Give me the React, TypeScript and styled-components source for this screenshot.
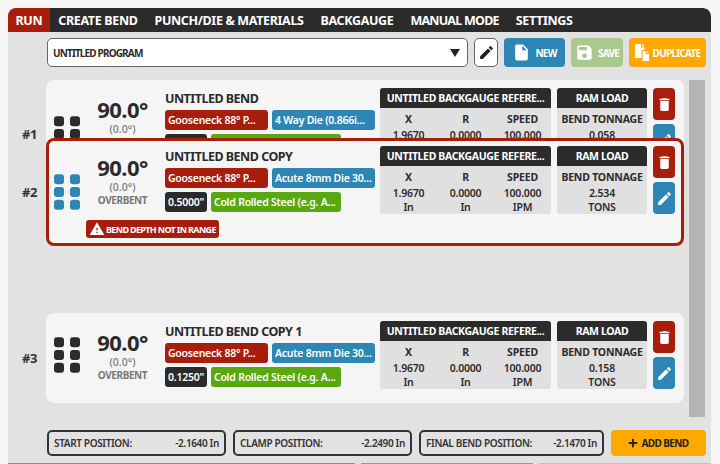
import React from "react";
import styled, { createGlobalStyle } from "styled-components";
import { FaPlus } from "react-icons/fa";
import { MdDelete, MdEdit, MdInsertDriveFile, MdSave, MdWarning } from "react-icons/md";

const RED = "#a81e0d";
const BLUE = "#2e86b5";
const GREEN = "#5aa80f";
const DARK = "#2b2b2b";
const ORANGE = "#ffa800";

const GlobalStyle = createGlobalStyle`
  html, body {
    margin: 0;
    height: 464px;
    overflow: hidden;
    background: #f5f5f5;
    font-family: "Noto Sans", "Liberation Sans", sans-serif;
    color: ${DARK};
  }
`;

const Page = styled.div`
  padding: 8px 9px 0 8px;
`;

const Panel = styled.main`
  background: #e2e2e2;
  border-radius: 8px 8px 0 0;
  height: 456px;
  overflow: hidden;
`;

const Nav = styled.nav`
  display: flex;
  height: 24px;
  background: ${DARK};
  border-radius: 8px 8px 0 0;
  overflow: hidden;
`;

const Tab = styled.div<{ active?: boolean; tight?: boolean }>`
  display: flex;
  align-items: center;
  padding: 0 ${p => (p.active ? "7.5px" : "8.5px")};
  background: ${p => (p.active ? RED : "transparent")};
  color: #fff;
  font-size: 12.5px;
  font-weight: 700;
  letter-spacing: ${p => (p.tight ? "-0.75px" : "-0.35px")};
  white-space: nowrap;
`;

const Toolbar = styled.div`
  display: flex;
  gap: 6px;
  margin: 6px 5px 0 39px;
  height: 29px;
`;

const Select = styled.div`
  flex: 1;
  display: flex;
  align-items: center;
  justify-content: space-between;
  padding: 0 5px;
  background: #fff;
  border: 1.5px solid #666;
  border-radius: 5px;
  font-size: 10px;
  font-weight: 700;
  letter-spacing: -0.85px;
`;

const Caret = styled.span`
  width: 0;
  height: 0;
  border-left: 5.5px solid transparent;
  border-right: 5.5px solid transparent;
  border-top: 8px solid #222;
  margin-right: 2px;
`;

const IconButton = styled.div`
  width: 24px;
  display: flex;
  align-items: center;
  justify-content: center;
  background: #fff;
  border: 1.5px solid #666;
  border-radius: 5px;
  box-sizing: border-box;
  font-size: 17px;
  color: #222;
`;

const ActionButton = styled.div<{ bg: string; width: number }>`
  width: ${p => p.width}px;
  display: flex;
  align-items: center;
  justify-content: center;
  gap: 4px;
  background: ${p => p.bg};
  border-radius: 4px;
  color: #fff;
  font-size: 10px;
  font-weight: 700;
  letter-spacing: -0.75px;
  svg {
    flex: none;
  }
`;

const Middle = styled.div`
  display: flex;
  gap: 5px;
  margin: 13px 6px 0 0;
  height: 337px;
`;

const List = styled.div`
  position: relative;
  width: 676px;
`;

const Scrollbar = styled.div`
  width: 16px;
  background: #b5b5b5;
`;

const Row = styled.div<{ dragged?: boolean; offset?: number }>`
  display: flex;
  align-items: center;
  ${p => (p.dragged ? "position: absolute; left: 0; top: 58px; z-index: 2;" : "")}
  margin-bottom: ${p => p.offset ?? 0}px;
`;

const RowNumber = styled.div`
  width: 38px;
  padding-left: 14px;
  box-sizing: border-box;
  font-size: 13px;
  font-weight: 700;
  letter-spacing: -0.3px;
  color: #333;
`;

const Card = styled.article<{ dragged?: boolean; hasAlert?: boolean }>`
  width: 638px;
  box-sizing: border-box;
  display: flex;
  align-items: center;
  gap: 7px;
  padding: 5px 6px ${p => (p.hasAlert ? "5px" : "11px")} 5px;
  background: #f5f5f5;
  border: 3px solid ${p => (p.dragged ? RED : "#f5f5f5")};
  border-radius: 8px;
`;

const Handle = styled.svg`
  flex: none;
  width: 26px;
  height: 36px;
`;

const CardBody = styled.div`
  flex: 1;
  display: flex;
  flex-direction: column;
  gap: 6px;
`;

const MainRow = styled.div`
  display: flex;
  align-items: flex-start;
`;

const Angle = styled.div`
  width: 71px;
  margin: 8px 7px 0 0;
  flex: none;
  display: flex;
  flex-direction: column;
  align-items: center;
  color: #777;
`;

const AngleValue = styled.div`
  font-size: 22px;
  line-height: 26px;
  font-weight: 700;
  letter-spacing: -0.6px;
  color: ${DARK};
`;

const AngleSub = styled.div`
  font-size: 10.5px;
  line-height: 14px;
  font-weight: 500;
`;

const AngleNote = styled.div`
  font-size: 10px;
  line-height: 13px;
  font-weight: 700;
  letter-spacing: -0.4px;
`;

const Info = styled.div`
  width: 215px;
  flex: none;
  display: flex;
  flex-direction: column;
  gap: 4px;
`;

const Title = styled.h2`
  margin: 0 0 -4px;
  font-size: 12.5px;
  line-height: 22px;
  font-weight: 700;
  letter-spacing: -0.5px;
`;

const PillRow = styled.div`
  display: flex;
  gap: 4px;
`;

const Pill = styled.div<{ bg: string; width?: number }>`
  height: 20px;
  width: ${p => (p.width ? `${p.width}px` : "auto")};
  box-sizing: border-box;
  padding: 0 3px;
  background: ${p => p.bg};
  border-radius: 3px;
  color: #fff;
  font-size: 10.5px;
  line-height: 20px;
  font-weight: 600;
  letter-spacing: -0.25px;
  white-space: nowrap;
`;

const Tables = styled.div`
  display: flex;
  gap: 6px;
`;

const DataTable = styled.section<{ width: number }>`
  width: ${p => p.width}px;
  background: #e0e0e0;
  border-radius: 3px;
  overflow: hidden;
`;

const TableHead = styled.div`
  height: 20px;
  background: ${DARK};
  color: #fff;
  font-size: 10.5px;
  line-height: 20px;
  font-weight: 700;
  letter-spacing: -0.35px;
  text-align: center;
  white-space: nowrap;
`;

const Columns = styled.div`
  display: flex;
  padding: 4px 0 0;
`;

const Column = styled.div`
  flex: 1;
  text-align: center;
  font-size: 10.5px;
  font-weight: 600;
  line-height: 14px;
  letter-spacing: -0.2px;
  white-space: nowrap;
`;

const ColumnLabel = styled.div`
  font-weight: 700;
  margin-bottom: 2px;
`;

const Buttons = styled.div`
  display: flex;
  flex-direction: column;
  gap: 4px;
  margin-left: 6px;
`;

const SquareButton = styled.div<{ bg: string }>`
  width: 22px;
  height: 32px;
  display: flex;
  align-items: center;
  justify-content: center;
  background: ${p => p.bg};
  border-radius: 4px;
  color: #fff;
  font-size: 17px;
`;

const Alert = styled.div`
  align-self: flex-start;
  margin-left: -1px;
  display: flex;
  align-items: center;
  gap: 1px;
  height: 18px;
  padding: 0 3px;
  background: ${RED};
  border-radius: 3px;
  color: #fff;
  font-size: 9px;
  font-weight: 700;
  letter-spacing: -0.65px;
  white-space: nowrap;
`;

const Footer = styled.div`
  display: flex;
  gap: 7px;
  margin: 13px 5px 0 39px;
  height: 26px;
`;

const Position = styled.div<{ width: number }>`
  width: ${p => p.width}px;
  box-sizing: border-box;
  display: flex;
  align-items: center;
  justify-content: space-between;
  padding: 0 5px;
  border: 2px solid #333;
  border-radius: 5px;
  font-size: 10px;
  font-weight: 600;
  letter-spacing: -0.35px;
  color: #333;
`;

const AddButton = styled.div`
  flex: 1;
  display: flex;
  align-items: center;
  justify-content: center;
  gap: 3px;
  background: ${ORANGE};
  border-radius: 4px;
  font-size: 10px;
  font-weight: 700;
  letter-spacing: -0.6px;
  color: #222;
`;

const BottomStrip = styled.div`
  display: flex;
  gap: 6px;
  margin-top: 7px;
  height: 10px;
`;

const StripPart = styled.div<{ bg: string; grow: number }>`
  flex: ${p => p.grow};
  background: ${p => p.bg};
`;

type Bend = {
  id: number;
  title: string;
  die: string;
  thickness: string;
  tonnage: string;
  alert: boolean;
};

const bends: Bend[] = [
  { id: 1, title: "UNTITLED BEND", die: "4 Way Die (0.866i...", thickness: '0.1250"', tonnage: "0.058", alert: true },
  { id: 2, title: "UNTITLED BEND COPY", die: "Acute 8mm Die 30...", thickness: '0.5000"', tonnage: "2.534", alert: true },
  { id: 3, title: "UNTITLED BEND COPY 1", die: "Acute 8mm Die 30...", thickness: '0.1250"', tonnage: "0.158", alert: false },
];

const GripIcon = ({ color }: { color: string }) => (
  <Handle viewBox="0 0 26 36">
    {[0.3, 13, 25.7].map(y =>
      [0, 16].map(x => <rect key={`${x}-${y}`} x={x} y={y} width="10" height="10" rx="3" fill={color} />)
    )}
  </Handle>
);

const DuplicateIcon = () => (
  <svg width="14" height="17" viewBox="0 0 14 17" fill="#fff">
    <path d="M0 0h6v3.500h3.500V6H6.500v8H0z" />
    <path d="M7 0l2.500 2.500H7z" />
    <path d="M7.500 7h3v3H14v7H7.500z" />
    <path d="M11.500 7L14 9h-2.500z" />
  </svg>
);

const BendCard = ({ bend, dragged }: { bend: Bend; dragged?: boolean }) => (
  <Card dragged={dragged} hasAlert={bend.alert}>
    <GripIcon color={dragged ? BLUE : DARK} />
    <CardBody>
      <MainRow>
        <Angle>
          <AngleValue>90.0°</AngleValue>
          <AngleSub>(0.0°)</AngleSub>
          <AngleNote>OVERBENT</AngleNote>
        </Angle>
        <Info>
          <Title>{bend.title}</Title>
          <PillRow>
            <Pill bg={RED} width={103}>Gooseneck 88° P...</Pill>
            <Pill bg={BLUE} width={103}>{bend.die}</Pill>
          </PillRow>
          <PillRow>
            <Pill bg={DARK}>{bend.thickness}</Pill>
            <Pill bg={GREEN} width={130}>Cold Rolled Steel (e.g. A...</Pill>
          </PillRow>
        </Info>
        <Tables>
          <DataTable width={171}>
            <TableHead>UNTITLED BACKGAUGE REFERE...</TableHead>
            <Columns>
              <Column><ColumnLabel>X</ColumnLabel>1.9670<br />In</Column>
              <Column><ColumnLabel>R</ColumnLabel>0.0000<br />In</Column>
              <Column><ColumnLabel>SPEED</ColumnLabel>100.000<br />IPM</Column>
            </Columns>
          </DataTable>
          <DataTable width={90}>
            <TableHead>RAM LOAD</TableHead>
            <Columns>
              <Column><ColumnLabel>BEND TONNAGE</ColumnLabel>{bend.tonnage}<br />TONS</Column>
            </Columns>
          </DataTable>
        </Tables>
        <Buttons>
          <SquareButton bg={RED}><MdDelete /></SquareButton>
          <SquareButton bg={BLUE}><MdEdit /></SquareButton>
        </Buttons>
      </MainRow>
      {bend.alert && (
        <Alert><MdWarning size={16} /> BEND DEPTH NOT IN RANGE</Alert>
      )}
    </CardBody>
  </Card>
);

const App: React.FC = () => (
  <Page>
    <GlobalStyle />
    <Panel>
      <Nav>
        <Tab active>RUN</Tab>
        <Tab>CREATE BEND</Tab>
        <Tab>PUNCH/DIE &amp; MATERIALS</Tab>
        <Tab>BACKGAUGE</Tab>
        <Tab tight>MANUAL MODE</Tab>
        <Tab>SETTINGS</Tab>
      </Nav>
      <Toolbar>
        <Select>UNTITLED PROGRAM<Caret /></Select>
        <IconButton><MdEdit /></IconButton>
        <ActionButton bg={BLUE} width={61}><MdInsertDriveFile size={19} /> NEW</ActionButton>
        <ActionButton bg="#a9c98f" width={52}><MdSave size={19} /> SAVE</ActionButton>
        <ActionButton bg={ORANGE} width={77}><DuplicateIcon /> DUPLICATE</ActionButton>
      </Toolbar>
      <Middle>
        <List>
          <Row offset={125}>
            <RowNumber>#1</RowNumber>
            <BendCard bend={bends[0]} />
          </Row>
          <Row dragged>
            <RowNumber>#2</RowNumber>
            <BendCard bend={bends[1]} dragged />
          </Row>
          <Row>
            <RowNumber>#3</RowNumber>
            <BendCard bend={bends[2]} />
          </Row>
        </List>
        <Scrollbar />
      </Middle>
      <Footer>
        <Position width={179}><span>START POSITION:</span><span>-2.1640 In</span></Position>
        <Position width={179}><span>CLAMP POSITION:</span><span>-2.2490 In</span></Position>
        <Position width={185}><span>FINAL BEND POSITION:</span><span>-2.1470 In</span></Position>
        <AddButton><FaPlus size={10} /> ADD BEND</AddButton>
      </Footer>
      <BottomStrip>
        <StripPart bg="#8a8a8a" grow={346} />
        <StripPart bg="#7ab648" grow={172} />
        <StripPart bg="#e8b0b0" grow={172} />
      </BottomStrip>
    </Panel>
  </Page>
);

export default App;
